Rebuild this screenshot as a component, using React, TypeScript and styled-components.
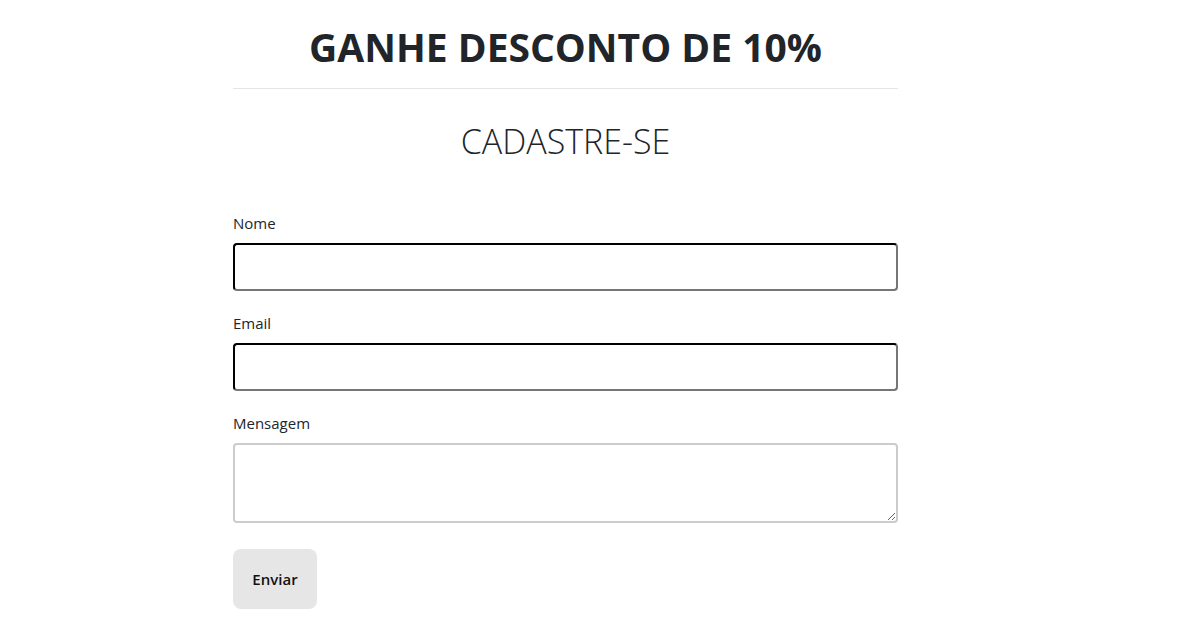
import React from 'react'
import styled, { createGlobalStyle } from 'styled-components'

const GlobalStyle = createGlobalStyle`
  body {
    margin: 0;
    background: #fff;
    color: #212529;
    font-family: 'Open Sans', 'Noto Sans', sans-serif;
  }
`

const Page = styled.div`
  width: 665px;
  margin-left: 233px;
  display: flex;
  flex-direction: column;
`

const Title = styled.h1`
  margin: 0;
  padding: 23px 0 17px;
  font-size: 39px;
  font-weight: 700;
  line-height: 48px;
  text-align: center;
  color: #212529;
  border-bottom: 1px solid #e6e6e6;
`

const Subtitle = styled.h2`
  margin: 0;
  padding-top: 28px;
  font-size: 34px;
  font-weight: 300;
  line-height: 48px;
  text-align: center;
  color: #212529;
`

const Form = styled.form`
  display: flex;
  flex-direction: column;
  padding-top: 48px;
`

const Field = styled.div`
  display: flex;
  flex-direction: column;
  gap: 10px;
  margin-bottom: 22px;
`

const Label = styled.label`
  font-size: 15px;
  line-height: 20px;
  color: #212529;
`

const Input = styled.input`
  box-sizing: border-box;
  width: 100%;
  height: 48px;
  border: 2px inset #767676;
  border-top-color: #1a1a1a;
  border-left-color: #1a1a1a;
  border-radius: 4px;
  background: #fff;
`

const TextArea = styled.textarea`
  box-sizing: border-box;
  width: 100%;
  height: 80px;
  border: 2px solid #cccccc;
  border-radius: 4px;
  background: #fff;
`

const Button = styled.button`
  align-self: flex-start;
  width: 84px;
  height: 60px;
  margin-top: 4px;
  border: none;
  border-radius: 8px;
  background: #e6e6e6;
  color: #111;
  font-family: 'Open Sans', 'Noto Sans', sans-serif;
  font-size: 15px;
  font-weight: 600;
`

const App: React.FC = () => (
  <>
    <GlobalStyle />
    <Page>
      <Title>GANHE DESCONTO DE 10%</Title>
      <Subtitle>CADASTRE-SE</Subtitle>
      <Form onSubmit={(e) => e.preventDefault()}>
        <Field>
          <Label htmlFor="nome">Nome</Label>
          <Input id="nome" type="text" />
        </Field>
        <Field>
          <Label htmlFor="email">Email</Label>
          <Input id="email" type="email" />
        </Field>
        <Field>
          <Label htmlFor="mensagem">Mensagem</Label>
          <TextArea id="mensagem" />
        </Field>
        <Button type="submit">Enviar</Button>
      </Form>
    </Page>
  </>
)

export default App
